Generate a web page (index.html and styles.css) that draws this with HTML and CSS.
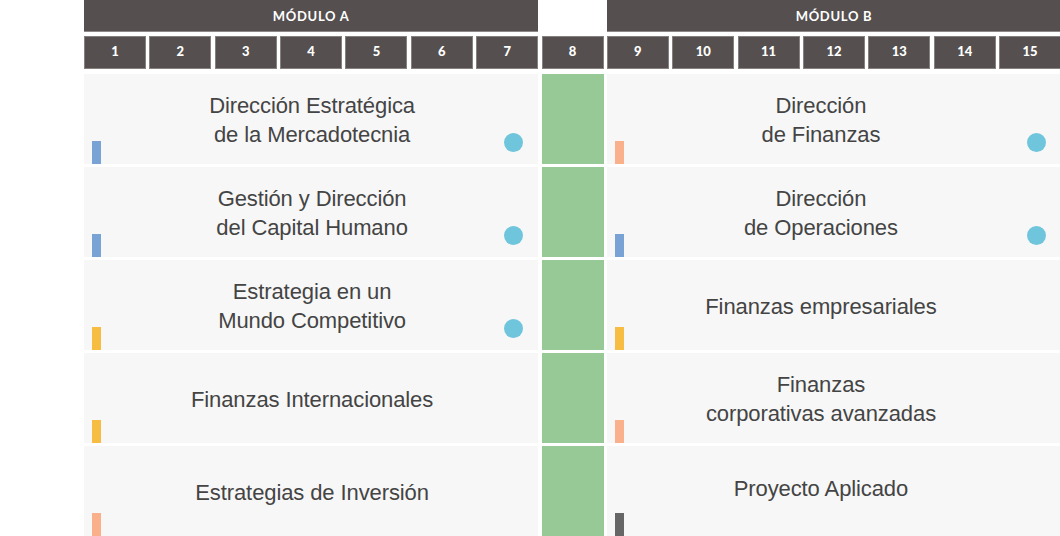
FILE: index.html
```html
<!DOCTYPE html>
<html lang="es">
<head>
<meta charset="utf-8">
<title>Plan de estudios</title>
<link rel="stylesheet" href="styles.css">
</head>
<body>
<div class="plan">
  <div class="mod mod-a">MÓDULO A</div>
  <div class="mod mod-b">MÓDULO B</div>

  <div class="num">1</div><div class="num">2</div><div class="num">3</div><div class="num">4</div><div class="num">5</div><div class="num">6</div><div class="num">7</div><div class="num">8</div><div class="num">9</div><div class="num">10</div><div class="num">11</div><div class="num">12</div><div class="num">13</div><div class="num">14</div><div class="num">15</div>

  <div class="cell left"><span class="bar blue"></span><p class="txt">Dirección Estratégica<br>de la Mercadotecnia</p><span class="dot"></span></div>
  <div class="mid"></div>
  <div class="cell right"><span class="bar salmon"></span><p class="txt">Dirección<br>de Finanzas</p><span class="dot"></span></div>

  <div class="cell left"><span class="bar blue"></span><p class="txt">Gestión y Dirección<br>del Capital Humano</p><span class="dot"></span></div>
  <div class="mid"></div>
  <div class="cell right"><span class="bar blue"></span><p class="txt">Dirección<br>de Operaciones</p><span class="dot"></span></div>

  <div class="cell left"><span class="bar yellow"></span><p class="txt">Estrategia en un<br>Mundo Competitivo</p><span class="dot"></span></div>
  <div class="mid"></div>
  <div class="cell right"><span class="bar yellow"></span><p class="txt">Finanzas empresariales</p></div>

  <div class="cell left"><span class="bar yellow"></span><p class="txt">Finanzas Internacionales</p></div>
  <div class="mid"></div>
  <div class="cell right"><span class="bar salmon"></span><p class="txt">Finanzas<br>corporativas avanzadas</p></div>

  <div class="cell left"><span class="bar salmon"></span><p class="txt">Estrategias de Inversión</p></div>
  <div class="mid"></div>
  <div class="cell right"><span class="bar dark"></span><p class="txt raised">Proyecto Aplicado</p></div>
</div>
</body>
</html>
```

FILE: styles.css
```css
html, body {
  margin: 0;
  padding: 0;
  background: #ffffff;
  overflow: hidden;
}

.plan {
  display: grid;
  grid-template-columns: repeat(15, 62px);
  grid-template-rows: 33px 35px repeat(5, 90px);
  column-gap: 3.36px;
  row-gap: 3px;
  margin-left: 84px;
  width: 977px;
}

.mod {
  height: 32px;
  align-self: start;
  background: #55504f;
  box-shadow: inset 0 -1px 0 #8e8988;
  color: #ffffff;
  font-family: Lato, "Open Sans", sans-serif;
  font-weight: 700;
  font-size: 13px;
  letter-spacing: 0.7px;
  display: flex;
  align-items: center;
  justify-content: center;
}

.mod-a { grid-column: 1 / 8; }
.mod-b { grid-column: 9 / 16; }

.num {
  grid-row: 2;
  height: 33px;
  align-self: start;
  background: #55504f;
  box-shadow: inset 0 0 0 1px #86817f;
  color: #ffffff;
  font-family: Lato, "Open Sans", sans-serif;
  font-weight: 900;
  font-size: 13px;
  display: flex;
  align-items: center;
  justify-content: center;
  padding-bottom: 3px;
  box-sizing: border-box;
}

.cell {
  position: relative;
  background: #f7f7f7;
  display: flex;
  align-items: center;
  justify-content: center;
}

.left { grid-column: 1 / 8; padding-left: 2px; }
.right { grid-column: 9 / 16; padding-right: 26px; }

.mid {
  grid-column: 8;
  background: #97c997;
}

.txt {
  margin: 0;
  padding-top: 2px;
  text-align: center;
  font-family: "Liberation Sans", Arial, sans-serif;
  font-size: 22px;
  line-height: 29px;
  letter-spacing: -0.1px;
  color: #444444;
}

.txt.raised { padding-top: 0; padding-bottom: 6px; }

.bar {
  position: absolute;
  left: 8px;
  bottom: 0;
  width: 9px;
  height: 23px;
}

.blue { background: #7aa3d5; }
.salmon { background: #f9b08b; }
.yellow { background: #f6bd42; }
.dark { background: #666666; }

.dot {
  position: absolute;
  right: 15px;
  bottom: 12px;
  width: 19px;
  height: 19px;
  border-radius: 50%;
  background: #6fc5dc;
}
```
